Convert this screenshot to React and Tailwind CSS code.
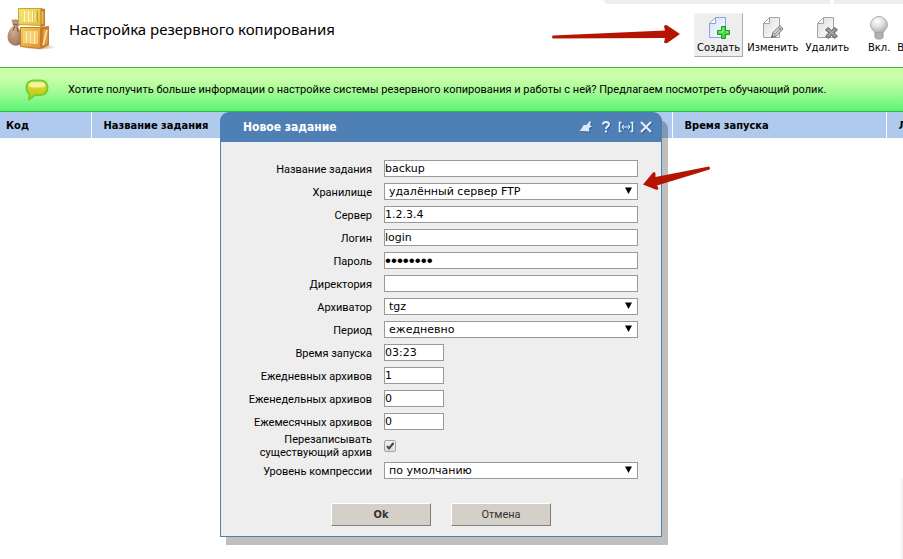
const regular = "font-['Roboto','DejaVu_Sans',sans-serif]";
const heading = "font-['Noto_Sans','DejaVu_Sans',sans-serif]";
const condensed = "font-['DejaVu_Sans_Condensed','DejaVu_Sans',sans-serif]";
const wide = "font-['DejaVu_Sans',sans-serif]";

function PageSheet({ tone, children }) {
  const blue = tone === "blue";
  return (
    <svg width="24" height="24" viewBox="0 0 24 24" aria-hidden="true">
      <defs>
        <linearGradient id={`sheet-${tone}`} x1="0" y1="0" x2="1" y2="1">
          <stop offset="0" stopColor={blue ? "#cfe0fa" : "#dcdcdc"} />
          <stop offset="1" stopColor="#ffffff" />
        </linearGradient>
      </defs>
      <path d="M8.5 1.5H18.5V21.5H2.500V7.500Z" fill={`url(#sheet-${tone})`} stroke={blue ? "#8aa6d6" : "#a3a3a3"} />
      <path d="M8.500 1.500V7.500H2.500Z" fill="#fff" stroke={blue ? "#8aa6d6" : "#a3a3a3"} strokeLinejoin="round" />
      {children}
    </svg>
  );
}

const CreateIcon = () => (
  <PageSheet tone="blue">
    <path d="M14.500 10.500h4v4h4v4h-4v4h-4v-4h-4v-4h4z" fill="#3fd63f" stroke="#1c9a28" />
    <path d="M16 12v4h-4M19 16h2" stroke="#a5f79c" fill="none" />
  </PageSheet>
);

const EditIcon = () => (
  <PageSheet tone="gray">
    <path d="M10.500 21.500l1.500-5 7-7 3 3.500-7 7.500z" fill="#d2d2d2" stroke="#777" strokeLinejoin="round" />
    <path d="M12 16.500l3 4M13.500 18.500l7-7M17.500 11.500l3 3.500" stroke="#8a8a8a" fill="none" />
    <path d="M10.500 21.500l.7-2.500 1.800 1.800z" fill="#555" />
  </PageSheet>
);

const DeleteIcon = () => (
  <PageSheet tone="gray">
    <path d="M13 11.500l3.500 3 3.500-3 2.500 2.500-3.500 3 3.500 3-2.500 2.500-3.500-3-3.500 3-2.500-2.500 3.500-3-3.500-3z" fill="#8c8c8c" stroke="#666" strokeLinejoin="round" />
    <path d="M13 13.500l7 6M20 13.500l-7 6" stroke="#b5b5b5" />
  </PageSheet>
);

const BulbIcon = () => (
  <svg width="24" height="24" viewBox="0 0 24 24" aria-hidden="true">
    <defs>
      <radialGradient id="bulb" cx=".4" cy=".3" r=".75">
        <stop offset="0" stopColor="#fff" />
        <stop offset=".5" stopColor="#dedede" />
        <stop offset="1" stopColor="#a9a9a9" />
      </radialGradient>
    </defs>
    <path d="M12 .5a8.500 8.500 0 0 1 8.500 8.500c0 3.500-3 5-4 7.500h-9c-1-2.500-4-4-4-7.500A8.500 8.500 0 0 1 12 .5z" fill="url(#bulb)" stroke="#b0b0b0" />
    <path d="M8 17h8v4.500l-2 1.500h-4l-2-1.500z" fill="#c9c9c9" stroke="#999" />
    <path d="M8 19h8M8 21h8" stroke="#999" />
  </svg>
);

const CratesIcon = () => (
  <svg width="50" height="44" viewBox="0 0 50 44" className="shrink-0" aria-hidden="true">
    <defs>
      <linearGradient id="crateTop" x1="0" y1="0" x2="1" y2="1">
        <stop offset="0" stopColor="#f6e86e" />
        <stop offset="1" stopColor="#e3b944" />
      </linearGradient>
      <linearGradient id="crateLow" x1="0" y1="0" x2="1" y2="1">
        <stop offset="0" stopColor="#f3cd55" />
        <stop offset="1" stopColor="#e0913a" />
      </linearGradient>
      <radialGradient id="sack" cx=".4" cy=".4" r=".7">
        <stop offset="0" stopColor="#d6b295" />
        <stop offset="1" stopColor="#9a7056" />
      </radialGradient>
      <radialGradient id="ground">
        <stop offset="0" stopColor="#666" stopOpacity=".7" />
        <stop offset="1" stopColor="#666" stopOpacity="0" />
      </radialGradient>
    </defs>
    <ellipse cx="32" cy="40" rx="17" ry="3" fill="url(#ground)" />
    <path d="M5 15c-1-2 1-3 2-2l2-1 1 1 4-1v4l-3 4c3 4 4 9 4 14 0 6-10 6-13 1-3-5-1-12 4-16z" fill="url(#sack)" />
    <path d="M6 17l5 1M8 19l-2 5M10 20l1 5" stroke="#7b5238" fill="none" />
    <path d="M34 20l8-1v19l-8 4z" fill="#c9792a" />
    <path d="M36 23l4.500-1v14L36 39z" fill="#e8a44c" />
    <path d="M36 38l4-15" stroke="#ffe3a0" strokeWidth="1.500" />
    <path d="M33 1l5 1v17l-5 1z" fill="#c47a24" />
    <path d="M34.500 4l2 .5v12l-2 .5z" fill="#f0b95a" />
    <path d="M13.500 20.500h20v21l-20-2z" fill="url(#crateLow)" stroke="#c67a22" />
    <path d="M16 24h15v13.500l-15-1z" fill="#d08a35" />
    <path d="M17.500 24v12.500M21.500 24v12.500M25.500 24v13M29.500 24v13" stroke="#f6cf74" strokeWidth="3" />
    <path d="M19.500 24v12.500M23.500 24v12.500M27.500 24v13" stroke="#fff0b8" />
    <path d="M11.500 1.500h22v17l-22-1z" fill="url(#crateTop)" stroke="#cba32f" />
    <path d="M14 4h17v11H14z" fill="#c6a23c" />
    <path d="M15.500 4v11M19.500 4v11M23.500 4v11M28 4v11" stroke="#f3dc70" strokeWidth="3" />
    <path d="M17.500 4v11M21.500 4v11M25.500 4v11" stroke="#fffbd0" />
  </svg>
);

const BubbleIcon = () => (
  <svg width="24" height="22" viewBox="0 0 24 22" className="shrink-0" aria-hidden="true">
    <defs>
      <linearGradient id="bubble" x1="0" y1="0" x2="0" y2="1">
        <stop offset="0" stopColor="#e9ee7a" />
        <stop offset=".5" stopColor="#cfd01e" />
        <stop offset="1" stopColor="#c3c418" />
      </linearGradient>
    </defs>
    <path d="M9 1.500h6c5 0 7.500 3 7.500 6.500 0 5-2.500 8-7.500 8h-5L4 20.500l.5-5.500C2.500 13.500 1.500 11 1.500 8 1.500 4.500 4 1.500 9 1.500z" fill="url(#bubble)" stroke="#74cc34" strokeWidth="2" strokeLinejoin="round" />
    <path d="M8 3.500h8c3 0 4 1.500 4 3.500-3 2-13 2-16 0C4 5 5 3.500 8 3.500z" fill="#fbfcc4" opacity=".7" />
  </svg>
);

function ToolButton({ label, icon, active }) {
  return (
    <button
      type="button"
      className={`flex h-11 shrink-0 flex-col items-center justify-end border px-0.5 pb-[2px] text-[10px] leading-3 whitespace-nowrap text-black ${wide} ${
        active ? "border-t-[#f4f4f4] border-r-[#aaa] border-b-[#aaa] border-l-[#f4f4f4] bg-[#eee]" : "border-transparent"
      }`}
    >
      {icon}
      <span className="mt-0.5">{label}</span>
    </button>
  );
}

const box = "h-[17px] border border-[#999] bg-white leading-[15px] text-black outline-none";
const fieldText = `text-[11px] ${wide}`;
const dotText = "text-[17px] font-['Liberation_Sans',sans-serif]";

function Row({ id, label, children }) {
  return (
    <div className="flex items-center py-[3px]">
      <label htmlFor={id} className="w-[151px] shrink-0 pt-0.5 pr-3 text-right leading-[15px]">{label}</label>
      {children}
    </div>
  );
}

function TextRow({ id, label, value, type = "text", short }) {
  return (
    <Row id={id} label={label}>
      <input
        id={id}
        type={type}
        defaultValue={value}
        className={`${box} ${type === "password" ? dotText : fieldText} ${short ? "w-15" : "min-w-0 flex-1"}`}
      />
    </Row>
  );
}

function SelectRow({ id, label, value }) {
  return (
    <Row id={id} label={label}>
      <div className="relative flex min-w-0 flex-1">
        <select id={id} className={`${box} ${fieldText} w-full appearance-none px-1`}>
          <option>{value}</option>
        </select>
        <svg width="7" height="7" viewBox="0 0 7 7" className="pointer-events-none absolute top-1 right-1.5" aria-hidden="true">
          <path d="M0 .5h7L3.500 7z" fill="#000" />
        </svg>
      </div>
    </Row>
  );
}

function TitleIcon({ label, children }) {
  return (
    <button type="button" aria-label={label} className="text-white drop-shadow-[1px_1px_0_#2f5f94]">
      <svg width="16" height="16" viewBox="0 0 16 16" fill="none" stroke="#e6eefa">{children}</svg>
    </button>
  );
}

function TaskDialog() {
  const action = "h-[23px] w-25 border border-t-white border-r-[#808080] border-b-[#808080] border-l-white bg-[#d4d0c8] pt-0.5 text-[11px] text-[#333]";
  return (
    <section
      role="dialog"
      aria-labelledby="dialog-title"
      className="absolute top-28 left-[220px] w-[442px] rounded-t-[9px] bg-[#4e80b6] shadow-[6px_8px_0_rgba(0,0,0,0.25)]"
    >
      <header className="flex h-[30px] items-center pr-2 pl-[23px]">
        <h2 id="dialog-title" className={`flex-1 text-xs font-bold text-white ${condensed}`}>Новое задание</h2>
        <div className="flex gap-1">
          <TitleIcon label="Закрепить">
            <path d="M1.500 12l2.500-3 1.500-3h3l3.500-4 1 1-1 3 2 1.500-3 1.500.5 3.500z" fill="#dce8f8" stroke="none" />
          </TitleIcon>
          <TitleIcon label="Справка">
            <path d="M5 5.500C5 3.500 6.500 3 8 3s3 .8 3 2.500C11 7.500 8 7.500 8 10" strokeWidth="2" />
            <path d="M8 11.500v2" strokeWidth="2" />
          </TitleIcon>
          <TitleIcon label="Развернуть">
            <path d="M3.500 3.500h-2v9h2M12.500 3.500h2v9h-2" strokeWidth="1.500" />
            <path d="M4 8h8M6 6L4 8l2 2M10 6l2 2-2 2" />
          </TitleIcon>
          <TitleIcon label="Закрыть">
            <path d="M3 3l10 10M13 3L3 13" strokeWidth="2" />
          </TitleIcon>
        </div>
      </header>
      <form className="mx-px mb-px bg-[#eee] pt-[15px] pr-[23px] pb-2.5 pl-3 text-[11px]" onSubmit={(e) => e.preventDefault()}>
        <TextRow id="name" label="Название задания" value="backup" />
        <SelectRow id="storage" label="Хранилище" value="удалённый сервер FTP" />
        <TextRow id="server" label="Сервер" value="1.2.3.4" />
        <TextRow id="login" label="Логин" value="login" />
        <TextRow id="password" label="Пароль" value="password" type="password" />
        <TextRow id="directory" label="Директория" value="" />
        <SelectRow id="archiver" label="Архиватор" value="tgz" />
        <SelectRow id="period" label="Период" value="ежедневно" />
        <TextRow id="time" label="Время запуска" value="03:23" short />
        <TextRow id="daily" label="Ежедневных архивов" value="1" short />
        <TextRow id="weekly" label="Еженедельных архивов" value="0" short />
        <TextRow id="monthly" label="Ежемесячных архивов" value="0" short />
        <div className="flex items-center">
          <label htmlFor="overwrite" className="w-[151px] shrink-0 pr-3 text-right leading-[13px]">Перезаписывать существующий архив</label>
          <span className="relative flex">
            <input id="overwrite" type="checkbox" defaultChecked className="size-3 appearance-none rounded-xs border border-[#a3a3a3] bg-linear-to-b from-[#f2f2f2] to-[#dcdcdc]" />
            <svg width="12" height="12" viewBox="0 0 12 12" className="pointer-events-none absolute inset-0" aria-hidden="true">
              <path d="M3 6l2 2.500L9.500 3" fill="none" stroke="#444" strokeWidth="2" />
            </svg>
          </span>
        </div>
        <SelectRow id="level" label="Уровень компрессии" value="по умолчанию" />
        <div className="flex justify-center gap-5 pt-[21px] pl-[11px]">
          <button type="submit" className={`${action} ${condensed} font-bold`}>Ok</button>
          <button type="button" className={action}>Отмена</button>
        </div>
      </form>
    </section>
  );
}

export default function App() {
  return (
    <main className={`relative min-h-screen overflow-hidden bg-white text-black ${regular}`}>
      <header className="flex h-[67px] overflow-hidden">
        <div className="flex min-w-0 flex-1 items-start gap-3 pt-[7px] pl-[7px]">
          <CratesIcon />
          <h1 className={`pt-3 text-[15px] leading-5 whitespace-nowrap ${heading}`}>Настройка резервного копирования</h1>
        </div>
        <div className="w-[299px] shrink-0">
          <div className="flex h-1 gap-1">
            <div className="w-[226px] rounded-bl-sm bg-[#eee]" />
            <div className="flex-1 bg-[#eee]" />
          </div>
          <div className="mt-[9px] ml-[90px] flex gap-px">
            <ToolButton label="Создать" icon={<CreateIcon />} active />
            <ToolButton label="Изменить" icon={<EditIcon />} />
            <ToolButton label="Удалить" icon={<DeleteIcon />} />
            <div className="ml-[11px] flex">
              <ToolButton label="Вкл." icon={<BulbIcon />} />
              <ToolButton label="Выкл." />
            </div>
          </div>
        </div>
      </header>
      <div className="flex h-[45px] items-center gap-[19px] border-y border-[#3fb53f] bg-linear-to-b from-[#c8ffa8] from-25% to-[#58f478] pl-[25px]">
        <BubbleIcon />
        <p className="pt-0.5 text-[11px] whitespace-nowrap">Хотите получить больше информации о настройке системы резервного копирования и работы с ней? Предлагаем посмотреть обучающий ролик.</p>
      </div>
      <table className={`w-full table-fixed border-collapse text-left text-[11px] ${condensed}`}>
        <thead>
          <tr className="h-[26px] bg-[#b0caee]">
            <th className="w-[91px] pt-0.5 pl-1.5">Код</th>
            <th className="border-l border-white pt-0.5 pl-3">Название задания</th>
            <th className="w-[214px] border-l border-white pt-0.5 pl-3">Время запуска</th>
            <th className="w-[17px] overflow-hidden border-l border-white pt-0.5 pl-3">Л</th>
          </tr>
        </thead>
      </table>
      <TaskDialog />
      <svg width="130" height="20" viewBox="0 0 130 20" className="absolute top-6 left-[551px]" aria-hidden="true">
        <path d="M2 11.500L114 6.500l-1-4.500q2-2 4 0l12 8-12 8.500q-2 1.500-4 0l1-4.500L2 14.500Q0 13 2 11.500z" fill="#b51400" />
      </svg>
      <svg width="70" height="26" viewBox="0 0 70 26" className="absolute top-[165px] left-[641px]" aria-hidden="true">
        <path d="M68 1.500q2 1.500.5 3L16 20.500l1.500 3q-.5 2-3 1L2 19.500l10-12q2-1 2.500 1l0 3.500z" fill="#b51400" />
      </svg>
      <div className="absolute right-0 bottom-0 h-20 w-[3px] bg-linear-to-l from-[#eee] to-white" />
    </main>
  );
}
